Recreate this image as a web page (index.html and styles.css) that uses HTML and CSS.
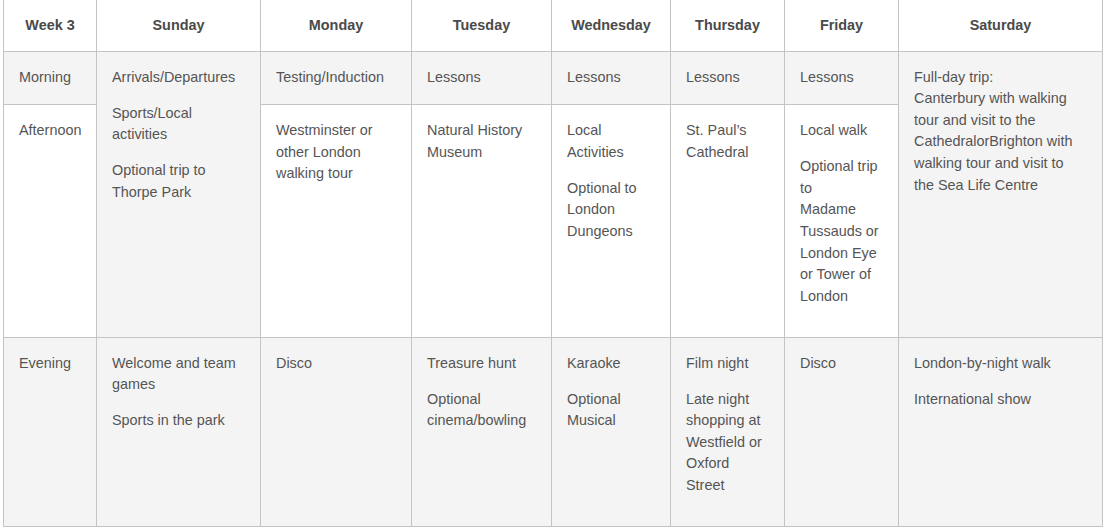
FILE: index.html
```html
<!DOCTYPE html>
<html>
<head>
<meta charset="utf-8">
<link rel="stylesheet" href="styles.css">
</head>
<body>
<table class="schedule">
  <colgroup>
    <col class="c-week">
    <col class="c-sun">
    <col class="c-mon">
    <col class="c-tue">
    <col class="c-wed">
    <col class="c-thu">
    <col class="c-fri">
    <col class="c-sat">
  </colgroup>
  <thead>
    <tr>
      <th>Week 3</th>
      <th>Sunday</th>
      <th>Monday</th>
      <th>Tuesday</th>
      <th>Wednesday</th>
      <th>Thursday</th>
      <th>Friday</th>
      <th>Saturday</th>
    </tr>
  </thead>
  <tbody>
    <tr class="shade morning">
      <td>Morning</td>
      <td rowspan="2"><p>Arrivals/Departures</p><p>Sports/Local activities</p><p>Optional trip to Thorpe Park</p></td>
      <td>Testing/Induction</td>
      <td>Lessons</td>
      <td>Lessons</td>
      <td>Lessons</td>
      <td>Lessons</td>
      <td rowspan="2"><p>Full-day trip:<br>Canterbury with walking tour and visit to the CathedralorBrighton with walking tour and visit to the Sea Life Centre</p></td>
    </tr>
    <tr>
      <td>Afternoon</td>
      <td><p>Westminster or other London walking tour</p></td>
      <td><p>Natural History Museum</p></td>
      <td><p>Local Activities</p><p>Optional to London Dungeons</p></td>
      <td><p>St. Paul’s Cathedral</p></td>
      <td><p>Local walk</p><p>Optional trip to<br>Madame Tussauds or London Eye or Tower of London</p></td>
    </tr>
    <tr class="shade">
      <td>Evening</td>
      <td><p>Welcome and team games</p><p>Sports in the park</p></td>
      <td><p>Disco</p></td>
      <td><p>Treasure hunt</p><p>Optional cinema/bowling</p></td>
      <td><p>Karaoke</p><p>Optional Musical</p></td>
      <td><p>Film night</p><p>Late night shopping at Westfield or Oxford Street</p></td>
      <td><p>Disco</p></td>
      <td><p>London-by-night walk</p><p>International show</p></td>
    </tr>
  </tbody>
</table>
</body>
</html>
```
FILE: styles.css
```css
html, body {
  margin: 0;
  padding: 0;
  background: #ffffff;
}

body {
  font-family: "Liberation Sans", Arial, sans-serif;
  font-size: 14.4px;
  line-height: 21.6px;
  color: #555555;
}

.schedule {
  border-collapse: collapse;
  table-layout: fixed;
  width: 1100px;
  margin: -1px 0 0 3px;
}

.c-week { width: 93px; }
.c-sun { width: 164px; }
.c-mon { width: 151px; }
.c-tue { width: 140px; }
.c-wed { width: 119px; }
.c-thu { width: 114px; }
.c-fri { width: 114px; }
.c-sat { width: 204px; }

.schedule th,
.schedule td {
  border: 1px solid #c4c4c4;
  padding: 15px;
  vertical-align: top;
  text-align: left;
}

.schedule th {
  padding-bottom: 14px;
  text-align: center;
  font-weight: bold;
  color: #4a4a4a;
  background: #ffffff;
}

.schedule tr.morning > td {
  padding-bottom: 16px;
}

.schedule tr.shade > td {
  background: #f4f4f4;
}

.schedule p {
  margin: 0 0 14.4px 0;
}
```
